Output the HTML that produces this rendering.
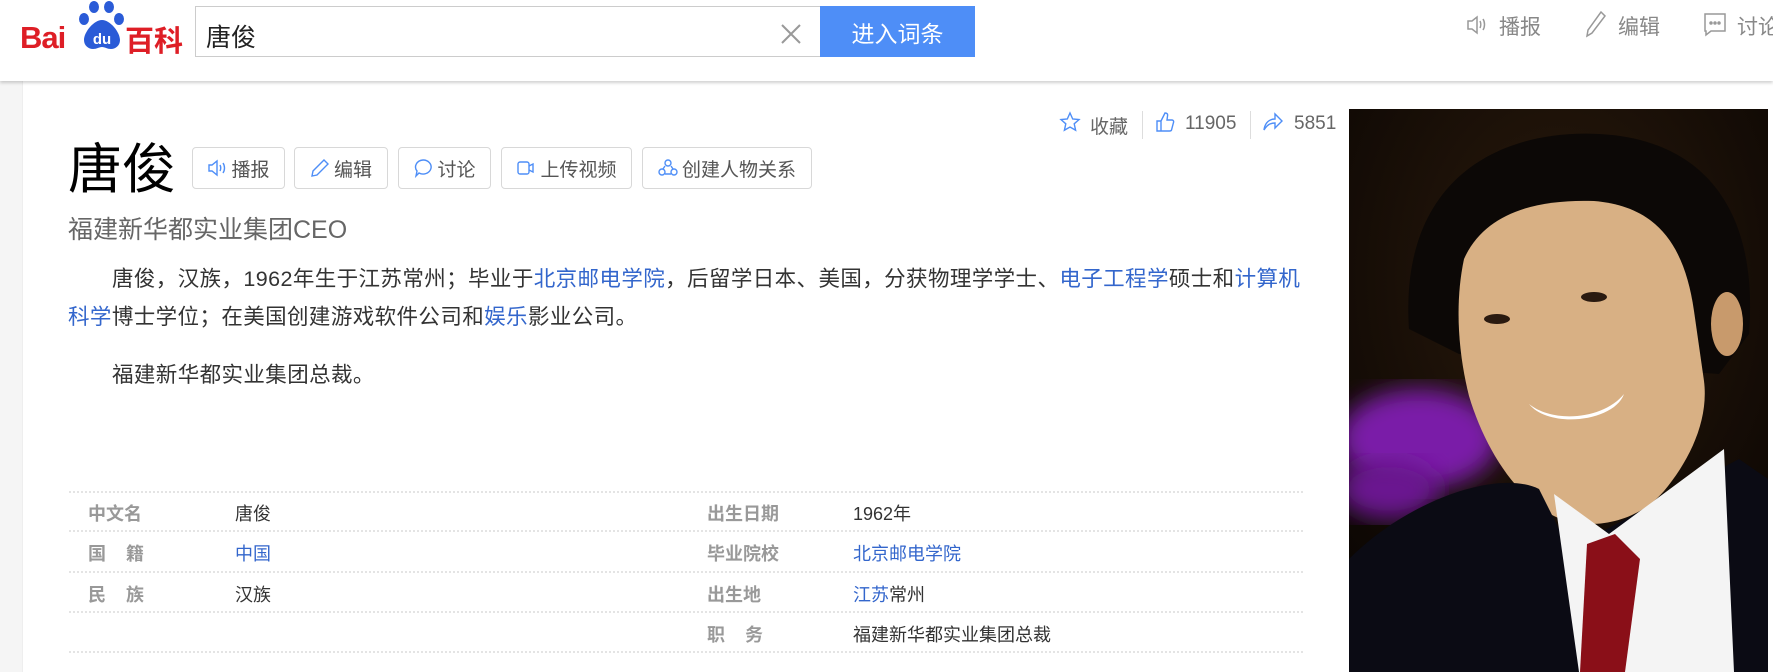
<!DOCTYPE html>
<html><head><meta charset="utf-8"><style>
*{margin:0;padding:0;box-sizing:border-box}
body{width:1773px;height:672px;overflow:hidden;background:#fff;font-family:"Liberation Sans","Noto Sans CJK SC",sans-serif;position:relative}
.a{position:absolute;white-space:nowrap}
.hdr{position:absolute;left:0;top:0;width:1773px;height:81px;background:#fff;box-shadow:0 2px 3px rgba(0,0,0,.18);z-index:2}
.strip{position:absolute;left:0;top:81px;width:23px;height:591px;background:#f5f5f5;border-right:1px solid #eee}
.btn{position:absolute;top:147px;height:42px;border:1px solid #d8d8d8;border-radius:4px;font-size:19px;color:#555;display:flex;align-items:center;justify-content:center;gap:4px}
.btn svg{width:20px;height:20px}
.p{font-size:21.5px;color:#333;line-height:38px;letter-spacing:0.4px}
.lab{font-size:18px;color:#999;font-weight:bold}
.val{font-size:18px;color:#333}
.lk,.val.lk{color:#3366cc}
.line{position:absolute;left:69px;width:1234px;border-top:2px dotted #e4e4e4;height:0}
</style></head><body>
<div class="hdr">
 <div class="a" style="left:20px;top:20px;font-size:31px;font-weight:bold;color:#de1e26;letter-spacing:-1px">Bai</div>
 <svg class="a" style="left:77px;top:0px" width="50" height="52" viewBox="0 0 50 52"><g fill="#2a5bd7"><ellipse cx="17" cy="7" rx="5" ry="6"/><ellipse cx="32" cy="7" rx="5" ry="6"/><ellipse cx="7" cy="19" rx="5" ry="6"/><ellipse cx="42" cy="19" rx="5" ry="6"/><path d="M25 20c-8 0-18 12-18 20 0 6 5 9 9 9 4 0 6-2 9-2s5 2 9 2 9-3 9-9c0-8-10-20-18-20z"/></g><text x="25" y="44" fill="#fff" font-size="15" font-weight="bold" text-anchor="middle" font-family="Liberation Sans">du</text></svg>
 <div class="a" style="left:125px;top:18px;font-size:29px;font-weight:bold;color:#de1e26">百科</div>
 <div class="a" style="left:195px;top:6px;width:626px;height:51px;border:1px solid #ccc;border-right:none"></div>
 <div class="a" style="left:206px;top:18px;font-size:25px;color:#222">唐俊</div>
 <svg class="a" style="left:780px;top:23px" width="22" height="22"><path d="M2 2L20 20M20 2L2 20" stroke="#999" stroke-width="2"/></svg>
 <div class="a" style="left:820px;top:6px;width:155px;height:51px;background:#4e8ef7;color:#fff;font-size:23px;display:flex;align-items:center;justify-content:center">进入词条</div>
 <svg class="a" style="left:1465px;top:12px" width="22" height="26" viewBox="0 0 22 26" fill="none" stroke="#999" stroke-width="1.5"><path d="M3 9h4l5-4v16l-5-4H3z"/><path d="M15 9c1 2 1 5 0 7M18 7c2 3 2 8 0 11"/></svg>
 <div class="a" style="left:1499px;top:11px;font-size:21px;color:#888">播报</div>
 <svg class="a" style="left:1585px;top:10px" width="22" height="28" viewBox="0 0 22 28" fill="none" stroke="#999" stroke-width="1.5"><path d="M16 2l4 4L7 23l-5 3 1-6z"/></svg>
 <div class="a" style="left:1618px;top:11px;font-size:21px;color:#888">编辑</div>
 <svg class="a" style="left:1703px;top:12px" width="24" height="26" viewBox="0 0 24 26" fill="none" stroke="#999" stroke-width="1.5"><path d="M2 2h20v17H8l-5 4v-4H2z"/><circle cx="8" cy="11" r="1" fill="#999"/><circle cx="12" cy="11" r="1" fill="#999"/><circle cx="16" cy="11" r="1" fill="#999"/></svg>
 <div class="a" style="left:1737px;top:11px;font-size:21px;color:#888">讨论</div>
</div>
<div class="strip"></div>

<div class="a" style="left:68px;top:138px;font-size:54px;color:#000;line-height:64px">唐俊</div>
<div class="btn" style="left:192px;width:93px"><svg viewBox="0 0 20 20" fill="none" stroke="#4e8ef7" stroke-width="1.4"><path d="M2 7h3l5-4v14l-5-4H2z"/><path d="M13 7c1 2 1 4 0 6M16 5c2 3 2 7 0 10"/></svg>播报</div>
<div class="btn" style="left:294px;width:94px"><svg viewBox="0 0 20 20" fill="none" stroke="#4e8ef7" stroke-width="1.4"><path d="M14 2l4 4L7 17l-5 1 1-5z"/></svg>编辑</div>
<div class="btn" style="left:398px;width:93px"><svg viewBox="0 0 20 20" fill="none" stroke="#4e8ef7" stroke-width="1.4"><path d="M10 2a8 7 0 1 1-4 13l-3 3 1-5A8 7 0 0 1 10 2z"/></svg>讨论</div>
<div class="btn" style="left:501px;width:131px"><svg viewBox="0 0 20 20" fill="none" stroke="#4e8ef7" stroke-width="1.4"><rect x="2" y="4" width="11" height="12" rx="2"/><path d="M13 8l4-2v8l-4-2"/></svg>上传视频</div>
<div class="btn" style="left:642px;width:170px"><svg viewBox="0 0 20 20" fill="none" stroke="#4e8ef7" stroke-width="1.4"><circle cx="10" cy="5" r="3"/><circle cx="4" cy="14" r="3"/><circle cx="16" cy="14" r="3"/><path d="M7 8l-2 3M13 8l2 3M7 16h6"/></svg>创建人物关系</div>

<div class="a" style="left:68px;top:210px;font-size:25px;color:#666">福建新华都实业集团CEO</div>
<div class="a p" style="left:68px;top:260px;width:1260px;white-space:normal;text-indent:44px">唐俊，汉族，1962年生于江苏常州；毕业于<span class="lk">北京邮电学院</span>，后留学日本、美国，分获物理学学士、<span class="lk">电子工程学</span>硕士和<span class="lk">计算机</span><br><span class="lk">科学</span>博士学位；在美国创建游戏软件公司和<span class="lk">娱乐</span>影业公司。</div>
<div class="a p" style="left:112px;top:356px">福建新华都实业集团总裁。</div>

<svg class="a" style="left:1059px;top:111px" width="22" height="22" viewBox="0 0 22 22"><path d="M11 2l2.7 6 6.3.6-4.8 4.2 1.4 6.4L11 16l-5.6 3.2 1.4-6.4L2 8.6 8.3 8z" fill="none" stroke="#4e8ef7" stroke-width="1.4"/></svg>
<div class="a" style="left:1090px;top:112px;font-size:19px;color:#666">收藏</div>
<div class="a" style="left:1142px;top:111px;width:1px;height:28px;background:#ddd"></div>
<svg class="a" style="left:1155px;top:111px" width="20" height="22" viewBox="0 0 20 22"><path d="M2 10h4v10H2zM6 10l4-8c2 0 3 1 2.5 3L12 9h5c1 0 2 1 1.5 2.5l-2 7.5c-.3 1-1 1-2 1H6" fill="none" stroke="#4e8ef7" stroke-width="1.4"/></svg>
<div class="a" style="left:1185px;top:113px;font-size:19px;color:#666">11905</div>
<div class="a" style="left:1250px;top:111px;width:1px;height:28px;background:#ddd"></div>
<svg class="a" style="left:1262px;top:111px" width="22" height="22" viewBox="0 0 22 22"><path d="M2 19C3 11 8 8 13 8V3l7 7-7 7v-5c-5 0-8 2-11 7z" fill="none" stroke="#4e8ef7" stroke-width="1.4"/></svg>
<div class="a" style="left:1294px;top:113px;font-size:19px;color:#666">5851</div>

<div class="line" style="top:491px"></div>
<div class="line" style="top:530px"></div>
<div class="line" style="top:571px"></div>
<div class="line" style="top:611px"></div>
<div class="line" style="top:651px"></div>
<div class="a lab" style="left:88px;top:500px">中文名</div><div class="a val" style="left:235px;top:500px">唐俊</div>
<div class="a lab" style="left:707px;top:500px">出生日期</div><div class="a val" style="left:853px;top:500px">1962年</div>
<div class="a lab" style="left:88px;top:540px">国&nbsp;&nbsp;&nbsp;&nbsp;籍</div><div class="a val lk" style="left:235px;top:540px">中国</div>
<div class="a lab" style="left:707px;top:540px">毕业院校</div><div class="a val lk" style="left:853px;top:540px">北京邮电学院</div>
<div class="a lab" style="left:88px;top:581px">民&nbsp;&nbsp;&nbsp;&nbsp;族</div><div class="a val" style="left:235px;top:581px">汉族</div>
<div class="a lab" style="left:707px;top:581px">出生地</div><div class="a val" style="left:853px;top:581px"><span class="lk">江苏</span>常州</div>
<div class="a lab" style="left:707px;top:621px">职&nbsp;&nbsp;&nbsp;&nbsp;务</div><div class="a val" style="left:853px;top:621px">福建新华都实业集团总裁</div>

<svg class="a" style="left:1349px;top:109px" width="419" height="563" viewBox="0 0 419 563">
<defs><radialGradient id="bg" cx="0.5" cy="0.3" r="0.8"><stop offset="0" stop-color="#2a1a0c"/><stop offset="1" stop-color="#080402"/></radialGradient>
<filter id="bl"><feGaussianBlur stdDeviation="12"/></filter></defs>
<rect width="419" height="563" fill="url(#bg)"/>
<ellipse cx="70" cy="330" rx="80" ry="50" fill="#7a1fa8" filter="url(#bl)"/>
<ellipse cx="40" cy="380" rx="50" ry="30" fill="#6a1890" filter="url(#bl)"/>
<path d="M60 220C50 70 150 20 250 25c100 5 160 70 150 200l-30 40-260-20z" fill="#0c0806"/>
<path d="M115 150c20-45 70-60 130-58 60 5 90 40 100 110l10 70c5 40-15 80-40 110-30 35-80 40-110 25-40-20-70-70-85-120-10-40-15-90-5-137z" fill="#d8b084"/>
<ellipse cx="378" cy="215" rx="16" ry="32" fill="#c89a6c"/>
<path d="M180 295c25 20 75 15 95-10-10 28-75 35-95 10z" fill="#fff"/>
<ellipse cx="148" cy="210" rx="13" ry="5" fill="#2a1a10"/><ellipse cx="245" cy="188" rx="13" ry="5" fill="#2a1a10"/>
<path d="M0 450c60-60 150-90 190-70l30 60 170-90 29 20v193H0z" fill="#0b0b14"/>
<path d="M205 385l55 40 115-85 10 223H230z" fill="#f4f4f4"/>
<path d="M238 435l28-10 25 25-15 113h-45z" fill="#8a0f18"/>
</svg>
</body></html>
